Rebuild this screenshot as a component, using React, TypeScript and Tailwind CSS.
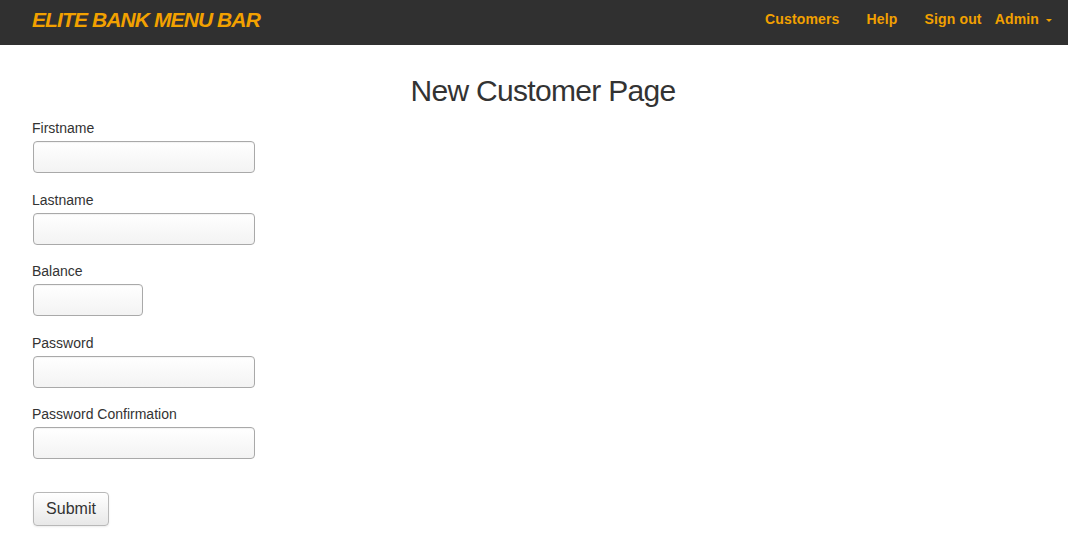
import React from "react";

const fields = [
    { label: "Firstname", w: "w-[222px]", type: "text" },
    { label: "Lastname", w: "w-[222px]", type: "text" },
    { label: "Balance", w: "w-[110px]", type: "text" },
    { label: "Password", w: "w-[222px]", type: "password" },
    { label: "Password Confirmation", w: "w-[222px]", type: "password" },
];

const App = () => {
    return (
        <div className="min-h-[545px] bg-white text-[#333] font-['Liberation_Sans',Arial,sans-serif]">
            <nav className="h-[45px] bg-[#303030] flex items-center justify-between pl-[32px] pr-[16px] pb-[6px]">
                <a href="#" className="text-[#f2a100] text-[21px] font-bold italic tracking-[-0.9px] leading-[30px]">
                    ELITE BANK MENU BAR
                </a>
                <div className="flex items-center text-[14px] font-bold text-[#f2a100] tracking-[0.15px]">
                    <a href="#" className="mr-[27px]">Customers</a>
                    <a href="#" className="mr-[27px]">Help</a>
                    <a href="#" className="mr-[13px]">Sign out</a>
                    <a href="#" className="flex items-center">
                        Admin
                        <span className="ml-[7px] mt-[1px] w-0 h-0 border-l-[3px] border-r-[3px] border-t-[3px] border-l-transparent border-r-transparent border-t-[#f2a100]" />
                    </a>
                </div>
            </nav>

            <div className="px-[32px]">
                <h1 className="text-center text-[30px] leading-[40px] tracking-[-0.7px] pl-[18px] mt-[26px] mb-[7px] text-[#333]">
                    New Customer Page
                </h1>
                <form className="flex flex-col">
                    {fields.map((f, i) => (
                        <div key={i} className="flex flex-col mb-[16.5px]">
                            <label className="text-[14px] leading-[20px] mb-[3px]">{f.label}</label>
                            <input
                                type={f.type}
                                className={`${f.w} h-[32px] ml-[1px] rounded-[4px] border border-[#a9a9a9] bg-gradient-to-b from-white to-[#f3f3f3] shadow-[inset_0_1px_1px_rgba(0,0,0,0.05)] px-2 outline-none`}
                            />
                        </div>
                    ))}
                    <div className="mt-[16px]">
                        <button
                            type="button"
                            className="ml-[1px] w-[76px] h-[34px] rounded-[4px] border border-[#b8b8b8] bg-gradient-to-b from-white to-[#e8e8e8] text-[16px] text-[#333] shadow-[0_1px_2px_rgba(0,0,0,0.08)]"
                        >
                            Submit
                        </button>
                    </div>
                </form>
            </div>
        </div>
    );
};

export default App;
